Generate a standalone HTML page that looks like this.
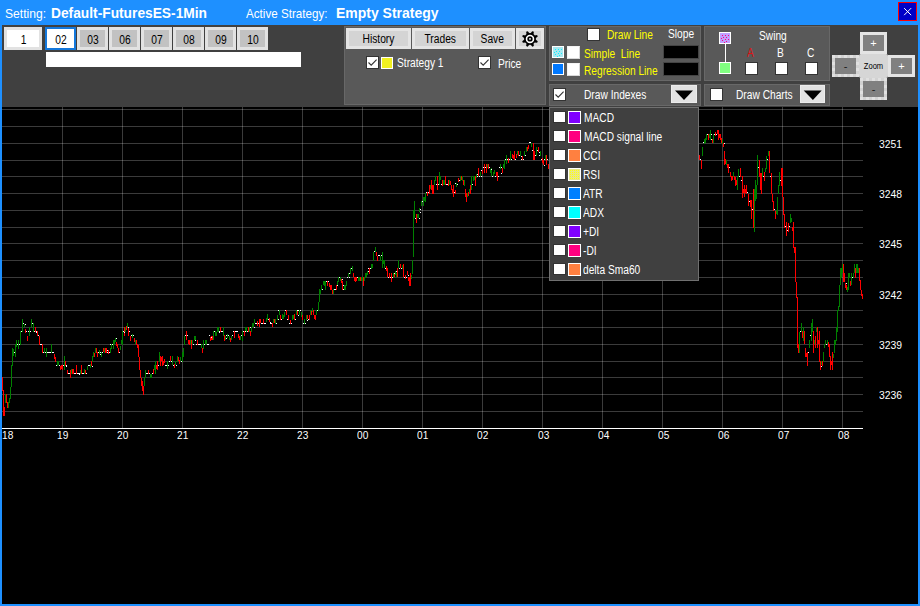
<!DOCTYPE html>
<html>
<head>
<meta charset="utf-8">
<style>
*{box-sizing:border-box;margin:0;padding:0}
html,body{width:920px;height:606px;overflow:hidden;background:#1e90ff;font-family:"Liberation Sans",sans-serif;}
#win{position:absolute;left:0;top:0;width:920px;height:606px;background:#1e90ff;overflow:hidden}
.abs{position:absolute}
.t{position:absolute;white-space:nowrap;line-height:1;color:#fff;transform-origin:0 0}
#close{position:absolute;left:898px;top:2px;width:19px;height:19px;background:#0000c8;border:1px solid #ff0000}
#tool{position:absolute;left:2px;top:25px;width:916px;height:82px;background:#404040}
#chart{position:absolute;left:2px;top:107px;width:916px;height:497px;background:#000}
.btn{position:absolute;border:3px solid #e4e4e4;color:#000;font-size:12.5px;text-align:center;line-height:1;padding-top:2px}
.panel{position:absolute;background:#595959;border:1px solid #686868}
.cb{position:absolute;background:#fff;border:1px solid #333}
.sw{position:absolute;border:1px solid #fff}
.dd{position:absolute;background:#e2e2e2;border:1px solid #ececec}
</style>
</head>
<body>
<div id="win">
<div class="t" style="left:5px;top:6.5px;font-size:13px;transform:scaleX(.93)">Setting:</div>
<div class="t" style="left:51px;top:5.5px;font-size:14px;font-weight:bold;transform:scaleX(.983)">Default-FuturesES-1Min</div>
<div class="t" style="left:246px;top:6.5px;font-size:13px;transform:scaleX(.895)">Active Strategy:</div>
<div class="t" style="left:336px;top:5.5px;font-size:14px;font-weight:bold;transform:scaleX(.998)">Empty Strategy</div>
<div id="close"><svg width="17" height="17" viewBox="0 0 17 17" style="position:absolute;left:0;top:0"><path d="M5.5 5.5 L11.8 11.8 M11.8 5.5 L5.5 11.8" stroke="#fff" stroke-width="1" fill="none" stroke-linecap="square"/></svg></div>
<div id="tool"></div>
<div class="btn" style="left:4px;top:27px;width:38px;height:23px;background:#fff;border:3px solid #e2e2e2;padding-top:4px"><span style="display:inline-block;transform:scaleX(.82)">1</span></div>
<div class="btn" style="left:45px;top:27px;width:31px;height:23px;background:#fff;border:2px solid #1478dc;padding-top:5px"><span style="display:inline-block;transform:scaleX(.82)">02</span></div>
<div class="btn" style="left:77px;top:27px;width:31px;height:23px;background:#c2c2c2;border:3px solid #e2e2e2;padding-top:4px"><span style="display:inline-block;transform:scaleX(.82)">03</span></div>
<div class="btn" style="left:109px;top:27px;width:31px;height:23px;background:#c2c2c2;border:3px solid #e2e2e2;padding-top:4px"><span style="display:inline-block;transform:scaleX(.82)">06</span></div>
<div class="btn" style="left:141px;top:27px;width:31px;height:23px;background:#c2c2c2;border:3px solid #e2e2e2;padding-top:4px"><span style="display:inline-block;transform:scaleX(.82)">07</span></div>
<div class="btn" style="left:173px;top:27px;width:31px;height:23px;background:#c2c2c2;border:3px solid #e2e2e2;padding-top:4px"><span style="display:inline-block;transform:scaleX(.82)">08</span></div>
<div class="btn" style="left:205px;top:27px;width:31px;height:23px;background:#c2c2c2;border:3px solid #e2e2e2;padding-top:4px"><span style="display:inline-block;transform:scaleX(.82)">09</span></div>
<div class="btn" style="left:237px;top:27px;width:31px;height:23px;background:#c2c2c2;border:3px solid #e2e2e2;padding-top:4px"><span style="display:inline-block;transform:scaleX(.82)">10</span></div>
<div class="abs" style="left:46px;top:52px;width:255px;height:15px;background:#fff"></div>
<div class="panel" style="left:344px;top:26px;width:202px;height:79px"></div>
<div class="btn" style="left:346px;top:28px;width:65px;height:21px;background:#d4d4d4"><span style="display:inline-block;transform:scaleX(0.82)">History</span></div>
<div class="btn" style="left:412px;top:28px;width:57px;height:21px;background:#d4d4d4"><span style="display:inline-block;transform:scaleX(0.82)">Trades</span></div>
<div class="btn" style="left:470px;top:28px;width:45px;height:21px;background:#d4d4d4"><span style="display:inline-block;transform:scaleX(0.82)">Save</span></div>
<div class="btn" style="left:516px;top:28px;width:28px;height:21px;background:#d4d4d4"><svg width="28" height="21" style="position:absolute;left:-3px;top:-3px" viewBox="0 0 28 21"><path d="M14.63 5.34 L16.30 3.13 L17.86 3.78 L17.49 6.52 L18.38 7.41 L21.12 7.04 L21.77 8.60 L19.56 10.27 L19.56 11.53 L21.77 13.20 L21.12 14.76 L18.38 14.39 L17.49 15.28 L17.86 18.02 L16.30 18.67 L14.63 16.46 L13.37 16.46 L11.70 18.67 L10.14 18.02 L10.51 15.28 L9.62 14.39 L6.88 14.76 L6.23 13.20 L8.44 11.53 L8.44 10.27 L6.23 8.60 L6.88 7.04 L9.62 7.41 L10.51 6.52 L10.14 3.78 L11.70 3.13 L13.37 5.34Z" fill="#000"/><circle cx="14" cy="10.9" r="5.8" fill="#000"/><circle cx="14" cy="10.9" r="3.45" fill="none" stroke="#fff" stroke-width="1.6"/><rect x="13.2" y="10.1" width="1.6" height="1.6" fill="#fff"/></svg></div>
<div class="cb" style="left:366px;top:56px;width:13px;height:13px"><svg width="11" height="11" viewBox="0 0 11 11" style="position:absolute;left:0;top:0"><path d="M1.5 5.5 L4.2 8.2 L9.6 2.6" stroke="#333" stroke-width="1.1" fill="none"/></svg></div>
<div class="sw" style="left:381px;top:57px;width:12px;height:12px;background:#f0f020;"></div>
<div class="t" style="left:396.5px;top:56.94px;font-size:12px;color:#fff;font-weight:normal;transform:scaleX(0.85);">Strategy 1</div>
<div class="cb" style="left:478px;top:56px;width:13px;height:13px"><svg width="11" height="11" viewBox="0 0 11 11" style="position:absolute;left:0;top:0"><path d="M1.5 5.5 L4.2 8.2 L9.6 2.6" stroke="#333" stroke-width="1.1" fill="none"/></svg></div>
<div class="t" style="left:497.5px;top:57.94px;font-size:12px;color:#fff;font-weight:normal;transform:scaleX(0.85);">Price</div>
<div class="panel" style="left:549px;top:26px;width:152px;height:55px"></div>
<div class="cb" style="left:587px;top:28px;width:13px;height:13px"></div>
<div class="t" style="left:606.5px;top:28.54px;font-size:12px;color:#ffff00;font-weight:normal;transform:scaleX(0.85);">Draw Line</div>
<div class="t" style="left:667.5px;top:27.94px;font-size:12px;color:#fff;font-weight:normal;transform:scaleX(0.85);">Slope</div>
<svg class="abs" style="left:552px;top:46px" width="12" height="12" shape-rendering="crispEdges"><rect width="12" height="12" fill="#fff"/><rect x="1" y="1" width="10" height="10" fill="#a8e8f0"/><rect x="3" y="3" width="1" height="1" fill="#10f0ff"/><rect x="6" y="3" width="1" height="1" fill="#10f0ff"/><rect x="9" y="3" width="1" height="1" fill="#10f0ff"/><rect x="4" y="5" width="1" height="1" fill="#10f0ff"/><rect x="7" y="5" width="1" height="1" fill="#10f0ff"/><rect x="2" y="6" width="1" height="1" fill="#10f0ff"/><rect x="6" y="7" width="1" height="1" fill="#10f0ff"/><rect x="9" y="7" width="1" height="1" fill="#10f0ff"/><rect x="3" y="8" width="1" height="1" fill="#10f0ff"/><rect x="7" y="9" width="1" height="1" fill="#10f0ff"/><rect x="5" y="10" width="1" height="1" fill="#10f0ff"/></svg>
<div class="cb" style="left:567px;top:46px;width:13px;height:13px;border-color:#f4f4f4 #d8d8d8 #d8d8d8 #f4f4f4"></div>
<div class="t" style="left:583.5px;top:48.04px;font-size:12px;color:#ffff00;font-weight:normal;transform:scaleX(0.85);">Simple&nbsp; Line</div>
<div class="sw" style="left:552px;top:63px;width:12px;height:12px;background:#0078ff;"></div>
<div class="cb" style="left:567px;top:63px;width:13px;height:13px;border-color:#f4f4f4 #d8d8d8 #d8d8d8 #f4f4f4"></div>
<div class="t" style="left:584px;top:65.04px;font-size:12px;color:#ffff00;font-weight:normal;transform:scaleX(0.85);">Regression Line</div>
<div class="abs" style="left:663px;top:45px;width:36px;height:14px;background:#000;border:1px solid #444"></div>
<div class="abs" style="left:663px;top:62px;width:36px;height:14px;background:#000;border:1px solid #444"></div>
<div class="panel" style="left:549px;top:84px;width:152px;height:22px"></div>
<div class="cb" style="left:553px;top:88px;width:13px;height:13px"><svg width="11" height="11" viewBox="0 0 11 11" style="position:absolute;left:0;top:0"><path d="M1.5 5.5 L4.2 8.2 L9.6 2.6" stroke="#333" stroke-width="1.1" fill="none"/></svg></div>
<div class="t" style="left:583.5px;top:88.94px;font-size:12px;color:#fff;font-weight:normal;transform:scaleX(0.85);">Draw Indexes</div>
<div class="dd" style="left:671px;top:85px;width:26px;height:18px"><svg width="26" height="18" style="position:absolute;left:0;top:0"><path d="M3 4.5 L21 4.5 L12 14 Z" fill="#000"/></svg></div>
<div class="panel" style="left:704px;top:26px;width:126px;height:55px"></div>
<svg class="abs" style="left:719px;top:32px" width="12" height="12" shape-rendering="crispEdges"><rect width="12" height="12" fill="#fff"/><rect x="1" y="1" width="10" height="10" fill="#c0a0ff"/><rect x="3" y="3" width="1" height="1" fill="#ff0080"/><rect x="6" y="3" width="1" height="1" fill="#ff0080"/><rect x="9" y="3" width="1" height="1" fill="#ff0080"/><rect x="4" y="5" width="1" height="1" fill="#ff0080"/><rect x="7" y="5" width="1" height="1" fill="#ff0080"/><rect x="2" y="6" width="1" height="1" fill="#ff0080"/><rect x="6" y="7" width="1" height="1" fill="#ff0080"/><rect x="9" y="7" width="1" height="1" fill="#ff0080"/><rect x="3" y="8" width="1" height="1" fill="#ff0080"/><rect x="7" y="9" width="1" height="1" fill="#ff0080"/><rect x="5" y="10" width="1" height="1" fill="#ff0080"/></svg>
<div class="abs" style="left:725px;top:44px;width:1px;height:18px;background:#fff"></div>
<div class="sw" style="left:719px;top:62px;width:12px;height:12px;background:#80ff80;"></div>
<div class="t" style="left:758.5px;top:29.84px;font-size:12px;color:#fff;font-weight:normal;transform:scaleX(0.85);">Swing</div>
<div class="t" style="left:747px;top:46.84px;font-size:12px;color:#e01010;font-weight:normal;transform:scaleX(0.85);">A</div>
<div class="t" style="left:777px;top:46.84px;font-size:12px;color:#fff;font-weight:normal;transform:scaleX(0.85);">B</div>
<div class="t" style="left:806.5px;top:46.84px;font-size:12px;color:#fff;font-weight:normal;transform:scaleX(0.85);">C</div>
<div class="cb" style="left:745px;top:62px;width:13px;height:13px"></div>
<div class="cb" style="left:775px;top:62px;width:13px;height:13px"></div>
<div class="cb" style="left:805px;top:62px;width:13px;height:13px"></div>
<div class="panel" style="left:704px;top:84px;width:126px;height:22px"></div>
<div class="cb" style="left:710px;top:88px;width:13px;height:13px"></div>
<div class="t" style="left:735.5px;top:88.94px;font-size:12px;color:#fff;font-weight:normal;transform:scaleX(0.85);">Draw Charts</div>
<div class="dd" style="left:800px;top:85px;width:25px;height:18px"><svg width="25" height="18" style="position:absolute;left:0;top:0"><path d="M2.7 4.5 L20.7 4.5 L11.9 14 Z" fill="#000"/></svg></div>
<div class="abs" style="left:860px;top:32px;width:27px;height:22px;background:#808080;border:3px solid #e4e4e4;color:#fff;font-size:11px;text-align:center;line-height:17px">+</div>
<div class="abs" style="left:832px;top:55px;width:27px;height:22px;background:#d2d2d2"></div><div class="abs" style="left:832px;top:55px;width:27px;height:22px;background:#808080;border:3px dotted #e0e0e0;background-clip:padding-box;outline:0;color:#1a1a1a;font-size:11px;text-align:center;line-height:17px">-</div>
<div class="abs" style="left:888px;top:55px;width:27px;height:22px;background:#808080;border:3px solid #e4e4e4;color:#fff;font-size:11px;text-align:center;line-height:17px">+</div>
<div class="abs" style="left:860px;top:78px;width:27px;height:22px;background:#d2d2d2"></div><div class="abs" style="left:860px;top:78px;width:27px;height:22px;background:#808080;border:3px dotted #e0e0e0;background-clip:padding-box;outline:0;color:#1a1a1a;font-size:11px;text-align:center;line-height:17px">-</div>
<div class="abs" style="left:859px;top:54px;width:29px;height:24px;background:#d6d6d6;border-radius:2px;color:#000;font-size:9px;text-align:center;line-height:25px"><span style="display:inline-block;transform:scaleX(.84)">Zoom</span></div>
<div id="chart"></div>
<svg class="abs" style="left:0;top:0" width="920" height="606" viewBox="0 0 920 606" shape-rendering="crispEdges">
<path d="M2 411.5H863M2 394.5H863M2 377.5H863M2 361.5H863M2 344.5H863M2 327.5H863M2 310.5H863M2 294.5H863M2 277.5H863M2 260.5H863M2 243.5H863M2 227.5H863M2 210.5H863M2 193.5H863M2 176.5H863M2 160.5H863M2 143.5H863M2 126.5H863M2 109.5H863" stroke="#fff" stroke-opacity=".23" stroke-width="1" fill="none"/>
<path d="M62.5 107V428M122.5 107V428M182.5 107V428M242.5 107V428M302.5 107V428M362.5 107V428M422.5 107V428M482.5 107V428M542.5 107V428M602.5 107V428M662.5 107V428M722.5 107V428M782.5 107V428M842.5 107V428" stroke="#fff" stroke-opacity=".23" stroke-width="1" fill="none"/>
<path d="M2 428.5H863" stroke="#fff" stroke-width="1" fill="none"/>
<path d="M5.5 394V403M8.5 402V408M9.5 398V403M10.5 387V399M11.5 365V387M12.5 348V366M13.5 349V356M15.5 344V357M16.5 340V347M18.5 340V349M20.5 331V345M22.5 319V332M24.5 324V327M29.5 327V336M31.5 319V327M33.5 323V332M44.5 348V353M46.5 348V357M51.5 344V353M57.5 361V366M58.5 361V365M64.5 356V370M71.5 369V374M80.5 370V374M84.5 369V374M87.5 366V370M90.5 364V368M92.5 356V362M93.5 352V357M95.5 348V353M99.5 350V354M101.5 352V357M104.5 348V353M110.5 348V353M111.5 344V349M113.5 340V349M114.5 340V344M115.5 338V342M120.5 346V350M121.5 340V344M122.5 331V345M125.5 327V332M127.5 323V327M132.5 334V338M135.5 340V344M144.5 378V386M145.5 370V378M150.5 374V378M151.5 374V378M154.5 365V370M155.5 361V374M159.5 352V362M167.5 361V369M172.5 356V365M175.5 361V365M177.5 356V362M180.5 357V361M182.5 352V362M183.5 348V357M184.5 336V345M190.5 340V344M192.5 340V344M194.5 336V340M195.5 336V340M201.5 344V348M203.5 340V349M205.5 340V345M206.5 340V344M213.5 331V340M215.5 331V336M216.5 332V336M217.5 327V332M218.5 327V332M223.5 327V336M225.5 336V340M227.5 334V338M229.5 336V340M231.5 336V340M240.5 336V340M242.5 331V341M245.5 327V332M246.5 327V332M249.5 327V332M251.5 327V332M252.5 323V327M253.5 323V327M254.5 319V323M266.5 318V322M267.5 314V320M273.5 319V323M275.5 319V324M277.5 315V320M279.5 310V315M282.5 314V319M283.5 315V319M284.5 312V317M292.5 315V320M293.5 315V319M296.5 310V315M299.5 310V315M301.5 312V317M304.5 319V324M306.5 315V320M310.5 310V315M312.5 308V312M316.5 310V315M318.5 302V311M319.5 289V302M320.5 290V294M321.5 285V290M323.5 281V285M324.5 281V286M325.5 281V290M333.5 289V294M337.5 281V286M338.5 277V282M340.5 277V281M344.5 285V290M345.5 285V290M346.5 281V286M348.5 273V277M350.5 268V274M352.5 266V271M358.5 277V281M359.5 277V281M361.5 277V281M362.5 277V281M364.5 277V281M365.5 273V278M366.5 273V277M367.5 271V275M371.5 264V269M372.5 264V268M373.5 252V261M375.5 247V252M380.5 256V261M382.5 252V268M383.5 260V264M384.5 260V268M393.5 273V278M395.5 271V275M396.5 273V277M398.5 260V268M402.5 265V269M411.5 275V279M412.5 260V274M413.5 210V257M414.5 201V218M417.5 214V218M418.5 214V218M419.5 208V212M421.5 201V206M423.5 197V206M424.5 197V201M425.5 193V202M430.5 185V189M434.5 180V185M435.5 176V181M439.5 172V185M440.5 176V180M443.5 180V185M444.5 180V185M449.5 180V185M456.5 183V187M460.5 176V181M462.5 176V181M464.5 180V186M467.5 193V197M469.5 189V193M471.5 176V190M473.5 176V181M474.5 176V180M476.5 174V178M480.5 172V176M487.5 164V168M490.5 169V173M491.5 168V176M493.5 172V176M494.5 170V174M500.5 164V169M503.5 164V168M504.5 160V169M506.5 155V164M510.5 151V160M517.5 151V155M520.5 151V156M524.5 151V156M526.5 147V152M531.5 143V147M536.5 147V156M540.5 151V156M545.5 155V160M702.5 147V156M704.5 139V144M705.5 138V143M706.5 134V140M709.5 134V138M710.5 130V140M713.5 134V143M722.5 139V144M726.5 160V165M733.5 172V177M737.5 177V190M738.5 169V177M754.5 189V232M755.5 180V201M756.5 185V199M757.5 155V185M762.5 168V177M765.5 168V172M766.5 156V169M768.5 151V156M776.5 210V214M777.5 197V215M778.5 185V194M779.5 172V186M790.5 214V223M791.5 218V222M799.5 332V353M801.5 323V332M803.5 327V341M809.5 340V348M811.5 323V341M812.5 319V332M814.5 340V344M816.5 327V332M821.5 361V365M823.5 352V362M824.5 344V348M825.5 340V344M827.5 340V344M833.5 354V358M834.5 340V353M835.5 340V345M836.5 327V341M837.5 310V332M838.5 306V311M839.5 285V307M840.5 268V285M841.5 268V278M842.5 264V273M847.5 287V292M848.5 273V290M849.5 273V278M851.5 273V285M853.5 273V278M854.5 264V273M856.5 264V273M857.5 264V273M858.5 268V273" stroke="#008000" stroke-width="1" fill="none"/>
<path d="M2.5 377V391M3.5 390V416M4.5 407V416M6.5 394V403M7.5 402V408M25.5 329V333M27.5 336V341M35.5 327V332M37.5 331V336M39.5 336V345M42.5 344V353M54.5 354V359M55.5 357V362M60.5 366V370M61.5 365V369M62.5 365V370M65.5 361V366M67.5 370V374M70.5 370V378M72.5 369V374M73.5 369V374M76.5 365V374M81.5 365V374M85.5 370V374M91.5 361V366M94.5 353V357M96.5 348V353M97.5 352V357M103.5 348V352M105.5 348V353M106.5 348V353M108.5 350V354M116.5 342V346M117.5 344V348M118.5 348V353M124.5 327V336M126.5 326V330M128.5 327V336M130.5 336V341M134.5 338V342M136.5 340V345M137.5 344V348M138.5 345V357M139.5 357V370M140.5 370V378M141.5 378V386M142.5 381V391M143.5 386V395M148.5 370V374M153.5 369V374M156.5 365V369M157.5 361V370M160.5 356V366M161.5 357V361M162.5 356V366M163.5 361V365M164.5 359V363M170.5 356V361M174.5 364V368M178.5 357V361M179.5 360V364M186.5 331V340M188.5 340V344M189.5 340V345M191.5 340V349M197.5 340V345M202.5 348V353M210.5 337V341M211.5 336V340M212.5 336V340M220.5 327V332M224.5 335V341M230.5 338V342M234.5 331V338M238.5 334V338M239.5 336V340M244.5 331V336M248.5 327V332M250.5 331V336M257.5 321V326M259.5 319V327M260.5 319V323M263.5 319V324M269.5 318V322M272.5 323V327M274.5 319V323M280.5 315V320M286.5 310V315M288.5 315V320M290.5 320V324M294.5 314V320M297.5 311V315M302.5 315V320M307.5 315V319M309.5 315V320M311.5 311V315M313.5 310V315M314.5 315V319M315.5 315V320M327.5 281V286M329.5 283V287M330.5 285V290M331.5 285V290M332.5 290V294M336.5 285V290M341.5 279V283M342.5 281V290M353.5 273V277M354.5 277V281M355.5 277V282M356.5 277V281M360.5 277V281M363.5 277V286M369.5 268V274M376.5 252V256M377.5 256V261M386.5 266V271M387.5 268V277M389.5 273V278M391.5 273V282M394.5 273V277M397.5 268V277M400.5 264V268M403.5 264V277M405.5 275V279M407.5 271V275M408.5 277V281M409.5 277V286M410.5 273V286M416.5 214V223M427.5 192V196M429.5 185V194M431.5 180V190M432.5 185V194M433.5 185V194M437.5 176V190M442.5 180V186M445.5 176V185M448.5 180V186M450.5 181V185M451.5 185V190M452.5 189V193M453.5 185V197M455.5 190V194M458.5 178V182M461.5 176V180M463.5 180V185M465.5 189V197M466.5 193V202M468.5 192V196M470.5 185V194M475.5 176V186M478.5 168V176M482.5 170V174M484.5 164V173M486.5 164V173M488.5 164V169M496.5 172V176M497.5 172V181M502.5 168V173M508.5 158V163M512.5 154V158M513.5 155V159M514.5 151V160M516.5 154V158M518.5 151V156M522.5 156V160M527.5 147V151M528.5 145V149M533.5 143V160M534.5 151V160M538.5 147V152M542.5 158V163M543.5 160V165M546.5 155V165M548.5 164V169M699.5 155V160M701.5 160V169M708.5 134V140M712.5 139V143M715.5 132V136M717.5 130V134M718.5 130V140M719.5 134V138M720.5 134V140M721.5 138V143M723.5 143V147M724.5 151V165M725.5 159V164M727.5 164V168M728.5 164V173M730.5 172V177M731.5 176V181M732.5 176V180M734.5 176V180M735.5 177V186M736.5 180V185M740.5 168V177M742.5 176V198M743.5 189V193M744.5 185V197M745.5 189V193M746.5 185V194M748.5 194V206M750.5 200V207M751.5 200V219M753.5 189V228M759.5 160V177M760.5 173V190M761.5 173V194M764.5 172V181M769.5 151V173M771.5 173V194M772.5 194V202M773.5 201V211M775.5 211V219M781.5 168V186M782.5 168V197M783.5 197V215M784.5 214V228M786.5 222V236M788.5 223V232M792.5 227V231M793.5 222V248M794.5 247V253M795.5 247V282M796.5 282V298M797.5 297V348M798.5 344V353M802.5 331V338M804.5 331V344M805.5 348V357M806.5 353V357M807.5 352V366M813.5 331V353M815.5 336V348M817.5 327V348M818.5 340V344M819.5 331V362M820.5 361V370M822.5 361V366M828.5 342V347M829.5 344V357M830.5 356V370M831.5 361V365M832.5 352V370M843.5 264V282M844.5 273V282M845.5 283V288M846.5 285V290M850.5 281V286M855.5 268V278M859.5 268V281M860.5 280V290M861.5 290V296M862.5 294V299" stroke="#ff0000" stroke-width="1" fill="none"/>
<path d="M14 352.5h1M17 344.5h1M19 344.5h1M21 331.5h1M23 323.5h1M25 324.5h1M26 331.5h1M28 331.5h1M30 331.5h1M32 323.5h1M34 331.5h1M36 332.5h1M36 331.5h1M38 335.5h1M40 344.5h1M41 344.5h1M43 352.5h1M45 352.5h1M47 352.5h1M48 352.5h1M49 352.5h1M50 352.5h1M52 352.5h1M53 352.5h1M56 365.5h1M59 365.5h1M63 365.5h1M66 366.5h1M66 365.5h1M68 373.5h1M69 373.5h1M74 373.5h1M75 373.5h1M77 373.5h1M78 373.5h1M79 373.5h1M79 374.5h1M82 373.5h1M83 373.5h1M86 373.5h1M88 365.5h1M89 365.5h1M92 366.5h1M98 352.5h1M100 354.5h1M100 352.5h1M102 352.5h1M102 352.5h1M107 352.5h1M107 350.5h1M109 352.5h1M110 344.5h1M112 344.5h1M116 338.5h1M119 352.5h1M123 331.5h1M124 332.5h1M128 327.5h1M129 331.5h1M131 335.5h1M133 335.5h1M146 373.5h1M147 373.5h1M149 373.5h1M152 373.5h1M158 365.5h1M165 365.5h1M166 365.5h1M168 365.5h1M169 361.5h1M171 361.5h1M173 365.5h1M176 365.5h1M181 361.5h1M185 335.5h1M187 335.5h1M193 344.5h1M195 340.5h1M196 344.5h1M198 344.5h1M199 344.5h1M200 344.5h1M204 344.5h1M207 344.5h1M208 344.5h1M209 335.5h1M211 337.5h1M214 331.5h1M219 332.5h1M219 331.5h1M221 331.5h1M222 331.5h1M226 335.5h1M226 338.5h1M228 335.5h1M232 335.5h1M233 331.5h1M235 331.5h1M236 331.5h1M237 331.5h1M241 335.5h1M243 331.5h1M245 331.5h1M247 331.5h1M250 327.5h1M250 327.5h1M254 327.5h1M255 323.5h1M256 323.5h1M258 323.5h1M261 323.5h1M262 323.5h1M264 323.5h1M265 323.5h1M268 319.5h1M270 322.5h1M270 323.5h1M271 323.5h1M276 323.5h1M278 319.5h1M278 310.5h1M281 319.5h1M285 310.5h1M287 319.5h1M289 323.5h1M291 323.5h1M295 319.5h1M297 310.5h1M298 310.5h1M298 315.5h1M300 310.5h1M303 323.5h1M305 323.5h1M307 320.5h1M308 319.5h1M317 310.5h1M322 289.5h1M326 281.5h1M328 281.5h1M334 289.5h1M335 289.5h1M337 285.5h1M339 277.5h1M342 279.5h1M343 289.5h1M343 285.5h1M347 277.5h1M349 273.5h1M349 277.5h1M351 268.5h1M357 277.5h1M368 271.5h1M368 268.5h1M370 268.5h1M374 251.5h1M378 255.5h1M379 255.5h1M381 255.5h1M385 268.5h1M388 277.5h1M390 277.5h1M392 277.5h1M394 273.5h1M396 271.5h1M399 268.5h1M401 268.5h1M404 277.5h1M406 277.5h1M408 275.5h1M415 218.5h1M419 218.5h1M420 212.5h1M420 209.5h1M422 201.5h1M426 192.5h1M428 192.5h1M436 184.5h1M438 184.5h1M441 184.5h1M446 184.5h1M447 184.5h1M454 192.5h1M455 183.5h1M457 184.5h1M459 180.5h1M472 184.5h1M477 174.5h1M477 176.5h1M479 176.5h1M481 176.5h1M481 170.5h1M483 167.5h1M485 167.5h1M489 167.5h1M491 169.5h1M492 176.5h1M495 176.5h1M498 176.5h1M499 167.5h1M501 167.5h1M501 173.5h1M505 159.5h1M507 159.5h1M509 159.5h1M511 159.5h1M515 159.5h1M519 155.5h1M521 156.5h1M521 159.5h1M521 156.5h1M523 159.5h1M525 155.5h1M529 142.5h1M530 142.5h1M532 150.5h1M535 155.5h1M537 150.5h1M539 152.5h1M539 155.5h1M541 159.5h1M544 165.5h1M544 159.5h1M547 159.5h1M700 159.5h1M703 142.5h1M707 134.5h1M711 134.5h1M711 139.5h1M714 134.5h1M716 134.5h1M724 143.5h1M729 167.5h1M739 176.5h1M741 180.5h1M747 192.5h1M749 201.5h1M752 209.5h1M758 167.5h1M763 176.5h1M767 159.5h1M770 176.5h1M774 209.5h1M780 180.5h1M785 226.5h1M787 230.5h1M789 226.5h1M800 331.5h1M808 352.5h1M810 335.5h1M821 366.5h1M826 344.5h1M846 283.5h1M852 277.5h1" stroke="#ffffff" stroke-width="1" fill="none"/>
</svg>
<div class="t" style="left:2px;top:430px;font-size:11px;transform:scaleX(.92)">18</div>
<div class="t" style="left:56.97px;top:430px;font-size:11px;transform:scaleX(.92)">19</div>
<div class="t" style="left:117.04px;top:430px;font-size:11px;transform:scaleX(.92)">20</div>
<div class="t" style="left:177.11px;top:430px;font-size:11px;transform:scaleX(.92)">21</div>
<div class="t" style="left:237.18px;top:430px;font-size:11px;transform:scaleX(.92)">22</div>
<div class="t" style="left:297.25px;top:430px;font-size:11px;transform:scaleX(.92)">23</div>
<div class="t" style="left:357.32px;top:430px;font-size:11px;transform:scaleX(.92)">00</div>
<div class="t" style="left:417.39px;top:430px;font-size:11px;transform:scaleX(.92)">01</div>
<div class="t" style="left:477.46px;top:430px;font-size:11px;transform:scaleX(.92)">02</div>
<div class="t" style="left:537.53px;top:430px;font-size:11px;transform:scaleX(.92)">03</div>
<div class="t" style="left:597.6px;top:430px;font-size:11px;transform:scaleX(.92)">04</div>
<div class="t" style="left:657.67px;top:430px;font-size:11px;transform:scaleX(.92)">05</div>
<div class="t" style="left:717.74px;top:430px;font-size:11px;transform:scaleX(.92)">06</div>
<div class="t" style="left:777.81px;top:430px;font-size:11px;transform:scaleX(.92)">07</div>
<div class="t" style="left:837.88px;top:430px;font-size:11px;transform:scaleX(.92)">08</div>
<div class="t" style="left:879px;top:139.0px;font-size:11.5px;transform:scaleX(.9)">3251</div>
<div class="t" style="left:879px;top:189.2px;font-size:11.5px;transform:scaleX(.9)">3248</div>
<div class="t" style="left:879px;top:239.4px;font-size:11.5px;transform:scaleX(.9)">3245</div>
<div class="t" style="left:879px;top:289.6px;font-size:11.5px;transform:scaleX(.9)">3242</div>
<div class="t" style="left:879px;top:339.8px;font-size:11.5px;transform:scaleX(.9)">3239</div>
<div class="t" style="left:879px;top:390.0px;font-size:11.5px;transform:scaleX(.9)">3236</div>
<div class="abs" style="left:549px;top:107px;width:150px;height:174px;background:#404040;border:1px solid #707070"></div>
<div class="cb" style="left:553px;top:111px;width:13px;height:12px"></div>
<div class="sw" style="left:568px;top:111px;width:13px;height:13px;background:#8000ff;"></div>
<div class="t" style="left:583.5px;top:112.04px;font-size:12px;color:#fff;font-weight:normal;transform:scaleX(0.85);">MACD</div>
<div class="cb" style="left:553px;top:130px;width:13px;height:12px"></div>
<div class="sw" style="left:568px;top:130px;width:13px;height:13px;background:#ff0080;"></div>
<div class="t" style="left:583.5px;top:131.04px;font-size:12px;color:#fff;font-weight:normal;transform:scaleX(0.85);">MACD signal line</div>
<div class="cb" style="left:553px;top:149px;width:13px;height:12px"></div>
<div class="sw" style="left:568px;top:149px;width:13px;height:13px;background:#ff8040;"></div>
<div class="t" style="left:582.5px;top:150.04px;font-size:12px;color:#fff;font-weight:normal;transform:scaleX(0.85);">CCI</div>
<div class="cb" style="left:553px;top:168px;width:13px;height:12px"></div>
<svg class="abs" style="left:568px;top:168px" width="13" height="13" shape-rendering="crispEdges"><rect width="13" height="13" fill="#fff"/><rect x="1" y="1" width="11" height="11" fill="#e8e888"/><rect x="2" y="2" width="1" height="1" fill="#ffff10"/><rect x="2" y="4" width="1" height="1" fill="#ffff10"/><rect x="2" y="6" width="1" height="1" fill="#ffff10"/><rect x="2" y="8" width="1" height="1" fill="#ffff10"/><rect x="2" y="10" width="1" height="1" fill="#ffff10"/><rect x="4" y="2" width="1" height="1" fill="#ffff10"/><rect x="4" y="4" width="1" height="1" fill="#ffff10"/><rect x="4" y="6" width="1" height="1" fill="#ffff10"/><rect x="4" y="8" width="1" height="1" fill="#ffff10"/><rect x="4" y="10" width="1" height="1" fill="#ffff10"/><rect x="6" y="2" width="1" height="1" fill="#ffff10"/><rect x="6" y="4" width="1" height="1" fill="#ffff10"/><rect x="6" y="6" width="1" height="1" fill="#ffff10"/><rect x="6" y="8" width="1" height="1" fill="#ffff10"/><rect x="6" y="10" width="1" height="1" fill="#ffff10"/><rect x="8" y="2" width="1" height="1" fill="#ffff10"/><rect x="8" y="4" width="1" height="1" fill="#ffff10"/><rect x="8" y="6" width="1" height="1" fill="#ffff10"/><rect x="8" y="8" width="1" height="1" fill="#ffff10"/><rect x="8" y="10" width="1" height="1" fill="#ffff10"/><rect x="10" y="2" width="1" height="1" fill="#ffff10"/><rect x="10" y="4" width="1" height="1" fill="#ffff10"/><rect x="10" y="6" width="1" height="1" fill="#ffff10"/><rect x="10" y="8" width="1" height="1" fill="#ffff10"/><rect x="10" y="10" width="1" height="1" fill="#ffff10"/></svg>
<div class="t" style="left:582.5px;top:169.04px;font-size:12px;color:#fff;font-weight:normal;transform:scaleX(0.85);">RSI</div>
<div class="cb" style="left:553px;top:187px;width:13px;height:12px"></div>
<div class="sw" style="left:568px;top:187px;width:13px;height:13px;background:#0080ff;"></div>
<div class="t" style="left:582.5px;top:188.04px;font-size:12px;color:#fff;font-weight:normal;transform:scaleX(0.85);">ATR</div>
<div class="cb" style="left:553px;top:206px;width:13px;height:12px"></div>
<div class="sw" style="left:568px;top:206px;width:13px;height:13px;background:#00ffff;"></div>
<div class="t" style="left:582.5px;top:207.04px;font-size:12px;color:#fff;font-weight:normal;transform:scaleX(0.85);">ADX</div>
<div class="cb" style="left:553px;top:225px;width:13px;height:12px"></div>
<div class="sw" style="left:568px;top:225px;width:13px;height:13px;background:#8000ff;"></div>
<div class="t" style="left:582.5px;top:226.04px;font-size:12px;color:#fff;font-weight:normal;transform:scaleX(0.85);">+DI</div>
<div class="cb" style="left:553px;top:244px;width:13px;height:12px"></div>
<div class="sw" style="left:568px;top:244px;width:13px;height:13px;background:#ff0080;"></div>
<div class="t" style="left:582.5px;top:245.04px;font-size:12px;color:#fff;font-weight:normal;transform:scaleX(0.85);">-DI</div>
<div class="cb" style="left:553px;top:263px;width:13px;height:12px"></div>
<div class="sw" style="left:568px;top:263px;width:13px;height:13px;background:#ff8040;"></div>
<div class="t" style="left:582.5px;top:264.04px;font-size:12px;color:#fff;font-weight:normal;transform:scaleX(0.85);">delta Sma60</div>
</div>
</body>
</html>
